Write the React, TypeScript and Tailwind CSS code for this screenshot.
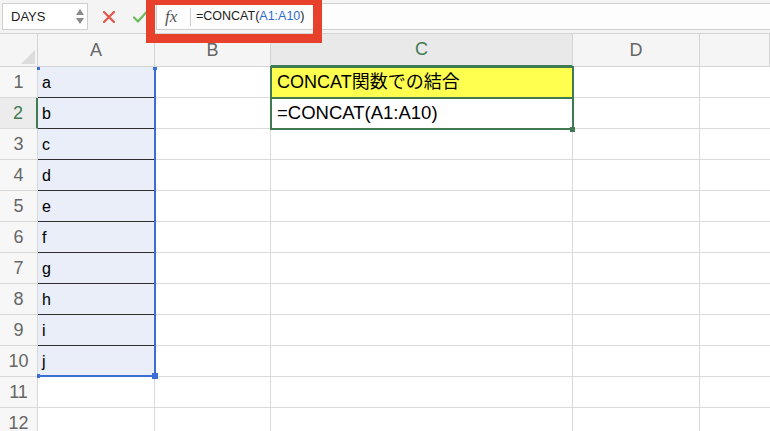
import React from "react";

const rows = [1, 2, 3, 4, 5, 6, 7, 8, 9, 10, 11, 12];
const aVals = ["a", "b", "c", "d", "e", "f", "g", "h", "i", "j"];

export default function App() {
  return (
    <div
      className="relative w-[770px] h-[431px] overflow-hidden bg-white"
      style={{ fontFamily: '"Liberation Sans", Arial, "Noto Sans CJK JP", sans-serif' }}
    >
      {/* Top formula bar */}
      <div className="h-[34px] flex items-center bg-[#f4f4f4] border-b border-[#d4d4d4]">
        <div className="ml-[2px] w-[86px] h-[27px] bg-white border border-[#cfcfcf] flex items-center justify-between pl-[8px] pr-[3px]">
          <span className="text-[13px] text-[#222]">DAYS</span>
          <div className="flex flex-col items-center leading-none text-[#8a8a8a]">
            <svg width="8" height="6" viewBox="0 0 8 6"><path d="M4 0 L8 6 L0 6 Z" fill="#8a8a8a" /></svg>
            <div className="h-[3px]" />
            <svg width="8" height="6" viewBox="0 0 8 6"><path d="M0 0 L8 0 L4 6 Z" fill="#8a8a8a" /></svg>
          </div>
        </div>
        <div className="ml-[15px] w-[12px] h-[12px]">
          <svg width="12" height="12" viewBox="0 0 12 12">
            <path d="M1 1 L11 11 M11 1 L1 11" stroke="#e0574a" strokeWidth="2.2" strokeLinecap="round" />
          </svg>
        </div>
        <div className="ml-[18px] w-[14px] h-[12px]">
          <svg width="14" height="12" viewBox="0 0 14 12">
            <path d="M1 6.5 L5 10.5 L13 1.5" stroke="#6dba5c" strokeWidth="2.2" fill="none" strokeLinecap="round" strokeLinejoin="round" />
          </svg>
        </div>
        <div className="ml-[9px] flex-1 h-[27px] bg-[#fdfdfd] border-y border-l border-[#d0d0d0] flex items-center">
          <span
            className="ml-[8px] w-[17px] text-[17px] italic text-[#555] leading-none"
            style={{ fontFamily: '"Liberation Serif", serif' }}
          >
            fx
          </span>
          <div className="ml-[8px] w-px h-[18px] bg-[#cfcfcf]" />
          <span className="ml-[5px] text-[12.5px] text-[#222]">
            =CONCAT(<span className="text-[#2f6bd0]">A1:A10</span>)
          </span>
        </div>
      </div>

      {/* Grid */}
      <div className="relative">
        <div className="grid grid-cols-[38px_117px_116px_302px_127px_1fr]">
          {/* header row */}
          <div className="relative h-[33px] bg-[#f5f5f5] border-r border-b border-[#d4d4d4]">
            <svg className="absolute right-[2px] bottom-[2px]" width="14" height="14" viewBox="0 0 14 14">
              <path d="M14 0 L14 14 L0 14 Z" fill="#dcdcdc" />
            </svg>
          </div>
          {["A", "B", "C", "D", ""].map((c) => (
            <div
              key={c || "E"}
              className={
                c === "C"
                  ? "h-[33px] flex items-center justify-center bg-[#e9e9e9] border-r border-[#d4d4d4] border-b-2 border-b-[#3f7a50] text-[18px] text-[#3f7a50]"
                  : "h-[33px] flex items-center justify-center bg-[#f5f5f5] border-r border-b border-[#d4d4d4] text-[18px] text-[#666]"
              }
            >
              {c}
            </div>
          ))}

          {rows.map((r) => (
            <React.Fragment key={r}>
              <div
                className={
                  r === 2
                    ? "h-[31px] flex items-center justify-center bg-[#ececec] border-r-2 border-r-[#3f7a50] border-b border-b-[#dcdcdc] text-[18px] text-[#3f7a50]"
                    : "h-[31px] flex items-center justify-center bg-[#f7f7f7] border-r border-b border-[#d8d8d8] text-[18px] text-[#666]"
                }
              >
                {r}
              </div>
              <div
                className={
                  r <= 10
                    ? r <= 9
                      ? "h-[31px] flex items-center pl-[4px] pt-[1px] bg-[#e9eef8] border-b border-b-[#2e2e2e] border-r border-r-[#dadada] text-[16px] text-black"
                      : "h-[31px] flex items-center pl-[4px] pt-[1px] bg-[#e9eef8] border-b border-r border-[#dadada] text-[16px] text-black"
                    : "h-[31px] border-r border-b border-[#dadada]"
                }
              >
                {r <= 10 ? aVals[r - 1] : ""}
              </div>
              <div className="h-[31px] border-r border-b border-[#dadada]" />
              <div
                className={
                  r === 1
                    ? "h-[31px] flex items-center pl-[6px] bg-[#ffff4f] border-r border-b border-[#dadada] text-[18px] text-black"
                    : r === 2
                    ? "h-[31px] flex items-center pl-[6px] border-r border-b border-[#dadada] text-[18.5px] text-black"
                    : "h-[31px] border-r border-b border-[#dadada]"
                }
              >
                {r === 1 ? "CONCAT関数での結合" : r === 2 ? "=CONCAT(A1:A10)" : ""}
              </div>
              <div className="h-[31px] border-r border-b border-[#dadada]" />
              <div className="h-[31px] border-b border-[#dadada]" />
            </React.Fragment>
          ))}
        </div>

        {/* Blue selection A1:A10 */}
        <div className="absolute left-[38px] top-[33px] w-[118px] h-[310px] border-r-2 border-b-2 border-[#3c6fd4] pointer-events-none" />
        <div className="absolute left-[37px] top-[33px] w-[3px] h-[3px] bg-[#3c6fd4]" />
        <div className="absolute left-[153px] top-[33px] w-[4px] h-[3px] bg-[#3c6fd4]" />
        <div className="absolute left-[37px] top-[340px] w-[3px] h-[4px] bg-[#3c6fd4]" />
        <div className="absolute left-[152px] top-[339px] w-[6px] h-[6px] bg-[#3c6fd4]" />

        {/* Green borders C1, C2 */}
        <div className="absolute left-[270px] top-[32px] w-[304px] h-[33px] border-2 border-[#3f7a50] pointer-events-none" />
        <div className="absolute left-[270px] top-[63px] w-[304px] h-[33px] border-2 border-[#3f7a50] pointer-events-none" />
        <div className="absolute left-[570px] top-[93px] w-[5px] h-[5px] bg-[#3f7a50]" />
      </div>

      {/* Red highlight annotation */}
      <div className="absolute left-[146px] top-[-4px] w-[176px] h-[47px] border-[9px] border-[#e8412b] pointer-events-none" />
    </div>
  );
}
